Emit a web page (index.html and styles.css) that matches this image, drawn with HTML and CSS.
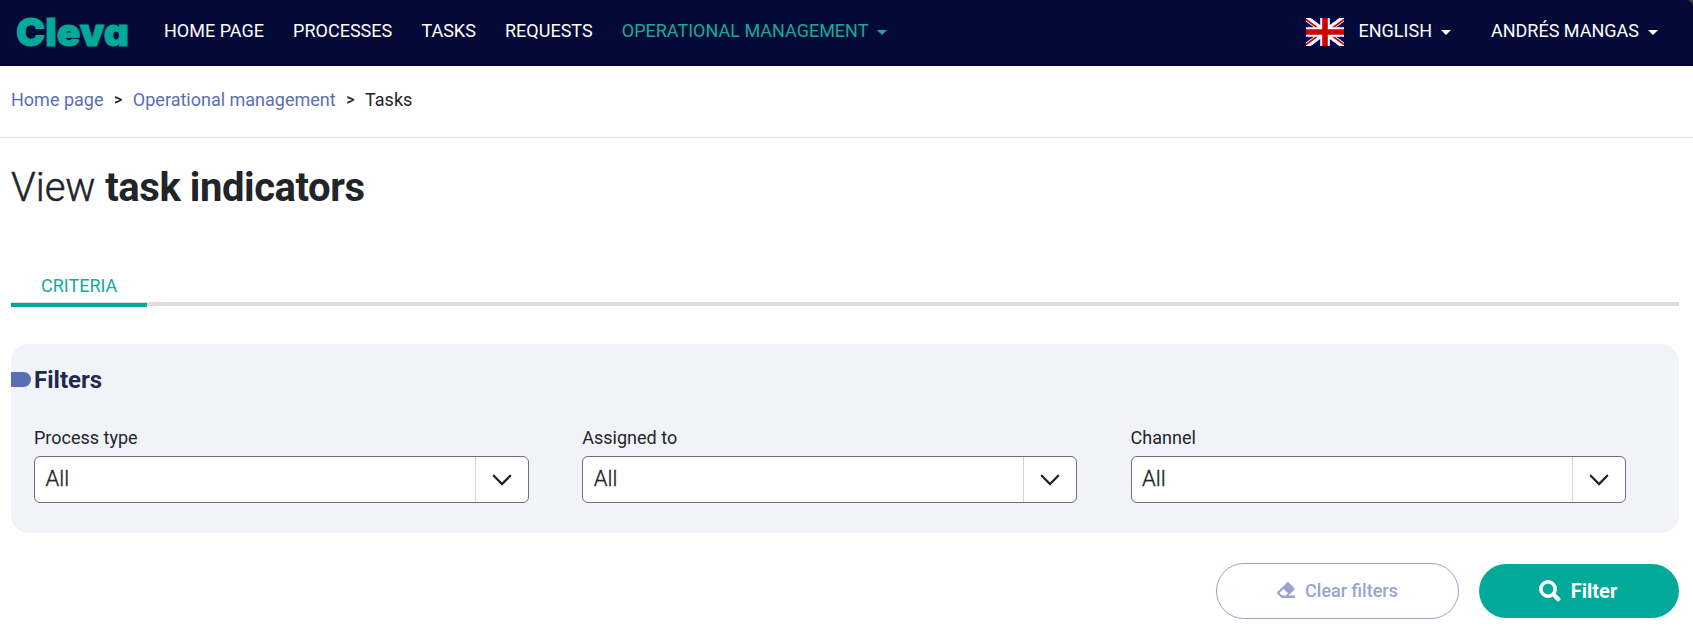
FILE: index.html
```html
<!DOCTYPE html>
<html lang="en">
<head>
<meta charset="utf-8">
<title>View task indicators</title>
<link rel="stylesheet" href="styles.css">
</head>
<body>
<div class="topbar-wrap">
<header class="topbar">
  <svg class="logo" width="114" height="50" viewBox="0 0 114 50"><text x="0" y="39" textLength="113" lengthAdjust="spacingAndGlyphs">Cleva</text></svg>
  <nav class="menu">
    <a>HOME PAGE</a><a>PROCESSES</a><a>TASKS</a><a>REQUESTS</a>
    <a class="active">OPERATIONAL MANAGEMENT<i class="caret"></i></a>
  </nav>
  <div class="lang">
    <svg class="flag" width="38" height="28" viewBox="0 0 38 28">
      <rect width="38" height="28" fill="#006"/>
      <path d="M0 0 38 28M38 0 0 28" stroke="#fff" stroke-width="5.6"/>
      <path d="M0 1.4 17 14M38 1.4 21 14M0 26.6 17 14M38 26.6 21 14" stroke="#c00" stroke-width="1.7"/>
      <path d="M19 0V28M0 14H38" stroke="#fff" stroke-width="9.6"/>
      <path d="M19 0V28M0 14H38" stroke="#c00" stroke-width="5.6"/>
    </svg>
    <span>ENGLISH<i class="caret"></i></span>
  </div>
  <div class="user">ANDRÉS MANGAS<i class="caret"></i></div>
</header>
</div>
<div class="crumbs"><a>Home page</a><b>&gt;</b><a>Operational management</a><b>&gt;</b><span>Tasks</span></div>
<main>
  <h1>View <strong>task indicators</strong></h1>
  <div class="tabs"><div class="tab">CRITERIA</div></div>
  <section class="card">
    <div class="card-head"><i class="marker"></i><h2>Filters</h2></div>
    <div class="fields">
      <div class="field"><label>Process type</label>
        <div class="select"><span>All</span><div class="arrow"><svg width="20" height="14" viewBox="0 0 20 14"><path d="M1.8 2.8 10 11 18.2 2.8"/></svg></div></div></div>
      <div class="field"><label>Assigned to</label>
        <div class="select"><span>All</span><div class="arrow"><svg width="20" height="14" viewBox="0 0 20 14"><path d="M1.8 2.8 10 11 18.2 2.8"/></svg></div></div></div>
      <div class="field"><label>Channel</label>
        <div class="select"><span>All</span><div class="arrow"><svg width="20" height="14" viewBox="0 0 20 14"><path d="M1.8 2.8 10 11 18.2 2.8"/></svg></div></div></div>
    </div>
  </section>
  <div class="actions">
    <button class="btn clear"><svg width="18" height="16" viewBox="0 0 18 16"><path fill="currentColor" fill-rule="evenodd" d="M10 .5a1.2 1.2 0 0 1 1.700 0L17.300 6a1.200 1.200 0 0 1 0 1.700L11.500 13.600H18V16H4.600L.5 11.900a1.500 1.500 0 0 1 0-2.100ZM6.600 6.900 2.400 11 5.200 13.600H8.600L11 11.200Z"/></svg><span>Clear filters</span></button>
    <button class="btn filter"><svg width="22" height="22" viewBox="0 0 22 22"><circle cx="9" cy="9" r="7.200"/><path d="M14 14 20.500 20.500"/></svg><span>Filter</span></button>
  </div>
</main>
</body>
</html>
```
FILE: styles.css
```css
* { box-sizing: border-box; }
body { margin: 0; background: #fff; color: #212529; font: 400 18px/27px Roboto, sans-serif; }
.topbar-wrap { background: linear-gradient(#3c3c3c 12px, #030a38 12px); }
.topbar { display: flex; align-items: center; height: 66px; padding: 0 35px 0 16px; background: #030a38; border-top-right-radius: 7px; color: #fff; }
.logo { flex: none; margin-right: 34px; margin-bottom: 3px; overflow: visible; }
.logo text { font: 900 39px Inter, sans-serif; font-feature-settings: "cv11"; fill: #00a99a; stroke: #00a99a; stroke-width: 1; }
.menu { display: flex; gap: 29.2px; flex: 1; padding-bottom: 6px; }
.topbar a, .lang span, .user { white-space: nowrap; }
.active { color: #14ab98; }
.caret { display: inline-block; margin-left: 9px; vertical-align: 2px; border: 5px solid transparent; border-top-color: currentColor; border-bottom: 0; }
.lang { display: flex; align-items: center; gap: 15px; margin-right: 40px; }
.lang span, .user { padding-bottom: 6px; }
.flag { display: block; margin-bottom: 2px; }
.crumbs { display: flex; height: 72px; padding: 20px 11px 0; border-bottom: 1px solid #dee2e6; }
.crumbs a { color: #5a6eb4; }
.crumbs b { width: 29.4px; text-align: center; font-weight: 500; font-size: 16px; }
main { padding: 26px 14px 0 11px; }
h1 { margin: 0; font-size: 40px; line-height: 48px; font-weight: 300; -webkit-text-stroke: .5px #212529; }
h1 strong { font-weight: 700; letter-spacing: -.45px; -webkit-text-stroke: 0; }
.tabs { margin-top: 58px; height: 36px; border-bottom: 4px solid #dcdcdc; margin-bottom: 38px; }
.tab { width: 136px; height: 37px; padding: 2px 0 0 30px; border-bottom: 4px solid #00a99a; color: #14ab98; }
.card { height: 189px; border-radius: 18px; background: #f2f3f9; padding-top: 19px; }
.card-head { display: flex; align-items: center; gap: 3px; height: 34px; }
.marker { width: 20px; height: 15px; margin-bottom: 2px; background: #5a6eb4; border-radius: 0 8px 8px 0; }
h2 { margin: 0; font-size: 24px; line-height: 34px; font-weight: 700; color: #1f2a4d; }
.fields { display: grid; grid-template-columns: repeat(3, 495px); column-gap: 53.3px; padding: 27px 0 0 23px; }
.field label { display: block; height: 32px; line-height: 28px; }
.select { display: flex; height: 47px; border: 1px solid #6c6c7d; border-radius: 6px; background: #fff; font-size: 22px; font-weight: 300; -webkit-text-stroke: .35px #212529; }
.select span { flex: 1; padding: 8px 10px 8px 10.5px; }
.arrow { display: flex; align-items: center; justify-content: center; width: 53px; border-left: 1px solid #d5d5d9; }
.arrow path { fill: none; stroke: #212529; stroke-width: 2.3; stroke-linecap: round; }
.actions { display: flex; justify-content: flex-end; align-items: center; gap: 20px; margin-top: 30px; }
.btn { display: flex; align-items: center; justify-content: center; border: 0; border-radius: 28px; font-family: inherit; padding: 0; }
.clear { gap: 10px; width: 243px; height: 56px; border: 1px solid #98a4d2; background: #fff; color: #98a4d2; font-size: 18px; font-weight: 500; }
.clear svg, .clear span { margin-bottom: 2px; }
.filter { gap: 10px; width: 200px; height: 54px; padding: 0 2px 1px 0; background: #00a99a; color: #fff; font-size: 20px; font-weight: 700; }
.filter circle, .filter path { fill: none; stroke: #fff; stroke-width: 3.600; }
.filter path { stroke-width: 4.200; }
```
